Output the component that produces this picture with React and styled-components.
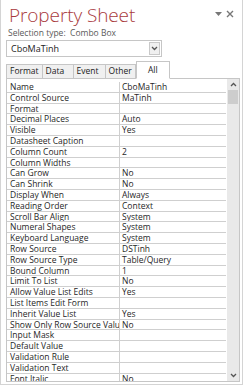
import React from "react";
import styled, { createGlobalStyle } from "styled-components";

const Global = createGlobalStyle`
  html, body { margin: 0; padding: 0; background: #ffffff; }
  body { width: 249px; height: 387px; overflow: hidden; }
`;

const Panel = styled.div`
  box-sizing: border-box;
  width: 243px;
  height: 385px;
  border-left: 1px solid #d4d4d4;
  border-right: 1px solid #d4d4d4;
  border-bottom: 1px solid #d4d4d4;
  background: #ffffff;
  display: flex;
  flex-direction: column;
  padding: 0 2px 0 5px;
  font-family: "Open Sans", "Noto Sans", sans-serif;
`;

const Header = styled.div`
  display: flex;
  align-items: flex-start;
  justify-content: space-between;
  height: 27px;
`;

const Title = styled.div`
  font-size: 19px;
  font-weight: 300;
  color: #a8393c;
  line-height: 24px;
  margin: 3px 0 0 3px;
  letter-spacing: -0.1px;
`;

const Controls = styled.div`
  display: flex;
  align-items: center;
  gap: 4px;
  margin: 10px 6px 0 0;
`;

const SelType = styled.div`
  font-size: 8.5px;
  color: #5a5a5a;
  margin-left: 2px;
  height: 12px;
  line-height: 11px;
  white-space: pre;
`;

const Combo = styled.div`
  box-sizing: border-box;
  margin-top: 1px;
  width: 156px;
  height: 17px;
  border: 1px solid #c6c6c6;
  display: flex;
  align-items: center;
  justify-content: space-between;
  padding: 0 1px 0 4px;
  font-size: 9px;
  color: #222;
`;

const ComboBtn = styled.div`
  box-sizing: border-box;
  width: 11px;
  height: 13px;
  border: 1px solid #c9c9c9;
  background: #f0f0f0;
  display: flex;
  align-items: center;
  justify-content: center;
`;

const TabStrip = styled.div`
  display: flex;
  align-items: flex-end;
  margin-top: 3px;
  height: 18px;
  position: relative;
  z-index: 1;
`;

const Tab = styled.div`
  box-sizing: border-box;
  height: ${(p) => (p.$active ? "18px" : "14px")};
  padding: 0 ${(p) => (p.$active ? "10px" : "3px")};
  min-width: ${(p) => p.$w}px;
  border: 1px solid #c6c6c6;
  border-right: ${(p) => (p.$last || p.$active ? "1px solid #c6c6c6" : "none")};
  border-bottom: ${(p) => (p.$active ? "1px solid #ffffff" : "none")};
  background: ${(p) => (p.$active ? "#ffffff" : "#f0f0f0")};
  font-size: 8.5px;
  color: #222;
  line-height: ${(p) => (p.$active ? "15px" : "12px")};
  text-align: ${(p) => (p.$active ? "center" : "left")};
  margin-bottom: ${(p) => (p.$active ? "-1px" : "0")};
`;

const Grid = styled.div`
  box-sizing: border-box;
  flex: 1;
  border: 1px solid #c6c6c6;
  display: flex;
  overflow: hidden;
  margin-bottom: 2px;
`;

const Rows = styled.div`
  flex: 1;
  overflow: hidden;
  padding-top: 3px;
`;

const Row = styled.div`
  display: grid;
  grid-template-columns: 113px 1fr;
  height: 10.8px;
  box-sizing: border-box;
  border-bottom: 1px solid #cfcfcf;
  font-size: 8.5px;
  line-height: 10px;
  color: #262626;
`;

const Name = styled.div`
  padding-left: 3px;
  border-right: 1px solid #cfcfcf;
  white-space: nowrap;
  overflow: hidden;
`;

const Value = styled.div`
  padding-left: 2px;
  white-space: nowrap;
  overflow: hidden;
`;

const Scroll = styled.div`
  width: 12px;
  background: #e9e9e9;
  display: flex;
  flex-direction: column;
  align-items: center;
  border-left: 1px solid #ffffff;
`;

const Arrow = styled.div`
  height: 11px;
  width: 100%;
  display: flex;
  align-items: center;
  justify-content: center;
`;

const Thumb = styled.div`
  width: 10px;
  height: 14px;
  background: #cdcdcd;
`;

const Spacer = styled.div`
  flex: 1;
`;

const props = [
  ["Name", "CboMaTinh"],
  ["Control Source", "MaTinh"],
  ["Format", ""],
  ["Decimal Places", "Auto"],
  ["Visible", "Yes"],
  ["Datasheet Caption", ""],
  ["Column Count", "2"],
  ["Column Widths", ""],
  ["Can Grow", "No"],
  ["Can Shrink", "No"],
  ["Display When", "Always"],
  ["Reading Order", "Context"],
  ["Scroll Bar Align", "System"],
  ["Numeral Shapes", "System"],
  ["Keyboard Language", "System"],
  ["Row Source", "DSTinh"],
  ["Row Source Type", "Table/Query"],
  ["Bound Column", "1"],
  ["Limit To List", "No"],
  ["Allow Value List Edits", "Yes"],
  ["List Items Edit Form", ""],
  ["Inherit Value List", "Yes"],
  ["Show Only Row Source Values", "No"],
  ["Input Mask", ""],
  ["Default Value", ""],
  ["Validation Rule", ""],
  ["Validation Text", ""],
  ["Font Italic", "No"],
];

const Chevron = ({ up }) => (
  <svg width="7" height="5" viewBox="0 0 7 5">
    <path
      d={up ? "M1 4 L3.5 1.5 L6 4" : "M1 1 L3.5 3.5 L6 1"}
      fill="none"
      stroke="#555"
      strokeWidth="1.3"
    />
  </svg>
);

export default function App() {
  return (
    <>
      <Global />
      <Panel>
        <Header>
          <Title>Property Sheet</Title>
          <Controls>
            <svg width="7" height="4" viewBox="0 0 7 4">
              <path d="M0 0 H7 L3.5 4 Z" fill="#777" />
            </svg>
            <svg width="8" height="8" viewBox="0 0 8 8">
              <path d="M1 1 L7 7 M7 1 L1 7" stroke="#777" strokeWidth="1.4" />
            </svg>
          </Controls>
        </Header>
        <SelType>Selection type:  Combo Box</SelType>
        <Combo>
          <span>CboMaTinh</span>
          <ComboBtn>
            <Chevron />
          </ComboBtn>
        </Combo>
        <TabStrip>
          <Tab $w={32}>Format</Tab>
          <Tab $w={31}>Data</Tab>
          <Tab $w={32}>Event</Tab>
          <Tab $w={28} $last>Other</Tab>
          <Tab $active $w={34}>All</Tab>
        </TabStrip>
        <Grid>
          <Rows>
            {props.map(([n, v]) => (
              <Row key={n}>
                <Name>{n}</Name>
                <Value>{v}</Value>
              </Row>
            ))}
          </Rows>
          <Scroll>
            <Arrow>
              <Chevron up />
            </Arrow>
            <Thumb />
            <Spacer />
            <Arrow>
              <Chevron />
            </Arrow>
          </Scroll>
        </Grid>
      </Panel>
    </>
  );
}
